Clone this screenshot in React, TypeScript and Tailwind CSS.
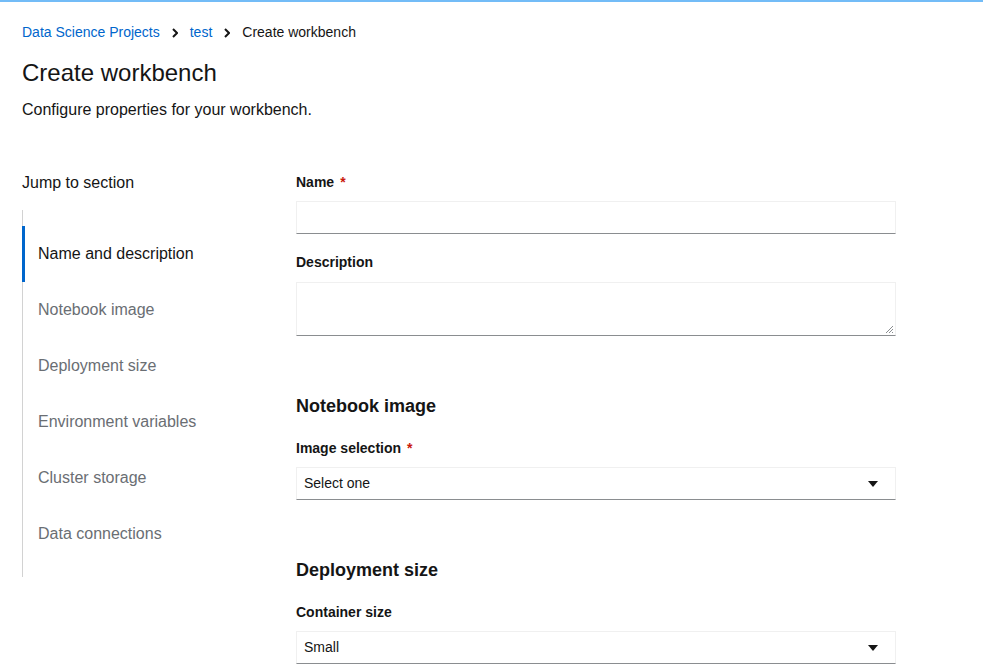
const navItems = [
  "Name and description",
  "Notebook image",
  "Deployment size",
  "Environment variables",
  "Cluster storage",
  "Data connections",
];

function Chevron() {
  return (
    <svg className="mx-[12px] shrink-0" width="6" height="10" viewBox="0 0 6 10">
      <path d="M1 1l4 4-4 4" fill="none" stroke="#151515" strokeWidth="2" />
    </svg>
  );
}

function Label({ text, required }: { text: string; required?: boolean }) {
  return (
    <div className="text-[14px] leading-[21px] font-bold text-[#151515]">
      {text}
      {required && <span className="ml-[6px] text-[#c9190b]">*</span>}
    </div>
  );
}

function Select({ value }: { value: string }) {
  return (
    <div className="mt-[8px] flex h-[33px] items-center justify-between border border-[#f0f0f0] border-b-[#8a8d90] pl-[7px] pr-[17px] text-[14px] text-[#151515]">
      <span>{value}</span>
      <svg width="10" height="6" viewBox="0 0 10 6">
        <path d="M0 0h10L5 6z" fill="#151515" />
      </svg>
    </div>
  );
}

export default function App() {
  return (
    <div className="min-h-screen bg-white font-['Liberation_Sans',Arial,sans-serif] text-[#151515]">
      <div className="h-[2px] bg-[#73bcf7]" />
      <div className="px-[22px] pt-[20px]">
        {/* breadcrumb */}
        <div className="flex items-center text-[14px] leading-[21px]">
          <span className="text-[#0066cc]">Data Science Projects</span>
          <Chevron />
          <span className="text-[#0066cc]">test</span>
          <Chevron />
          <span>Create workbench</span>
        </div>
        <h1 className="mt-[14px] text-[24px] leading-[31px]">Create workbench</h1>
        <p className="mt-[10px] text-[16px] leading-[24px]">Configure properties for your workbench.</p>

        <div className="mt-[49px] flex">
          {/* jump to section */}
          <div className="w-[274px] shrink-0">
            <div className="text-[16px] leading-[24px]">Jump to section</div>
            <div className="mt-[15px] border-l border-[#d2d2d2] pt-[16px] pb-[15px]">
              {navItems.map((item, i) => (
                <div
                  key={item}
                  className={
                    i === 0
                      ? "-ml-px flex h-[56px] items-center border-l-[3px] border-[#0066cc] pl-[13px] text-[16px] text-[#151515]"
                      : "flex h-[56px] items-center pl-[15px] text-[16px] text-[#6a6e73]"
                  }
                >
                  {item}
                </div>
              ))}
            </div>
          </div>

          {/* form */}
          <div className="w-[600px] pt-[1px]">
            <Label text="Name" required />
            <div className="mt-[8px] h-[33px] border border-[#f0f0f0] border-b-[#8a8d90]" />
            <div className="mt-[18px]">
              <Label text="Description" />
            </div>
            <div className="relative mt-[9px] h-[54px] border border-[#f0f0f0] border-b-[#8a8d90]">
              <svg className="absolute right-[1px] bottom-[1px]" width="9" height="9" viewBox="0 0 9 9">
                <path d="M8 1L1 8M8 4L4 8M8 7L7 8" stroke="#8a8d90" strokeWidth="1" />
              </svg>
            </div>

            <h2 className="mt-[57px] text-[18px] leading-[27px] font-semibold">Notebook image</h2>
            <div className="mt-[18px]">
              <Label text="Image selection" required />
            </div>
            <Select value="Select one" />

            <h2 className="mt-[57px] text-[18px] leading-[27px] font-semibold">Deployment size</h2>
            <div className="mt-[18px]">
              <Label text="Container size" />
            </div>
            <Select value="Small" />
          </div>
        </div>
      </div>
    </div>
  );
}
